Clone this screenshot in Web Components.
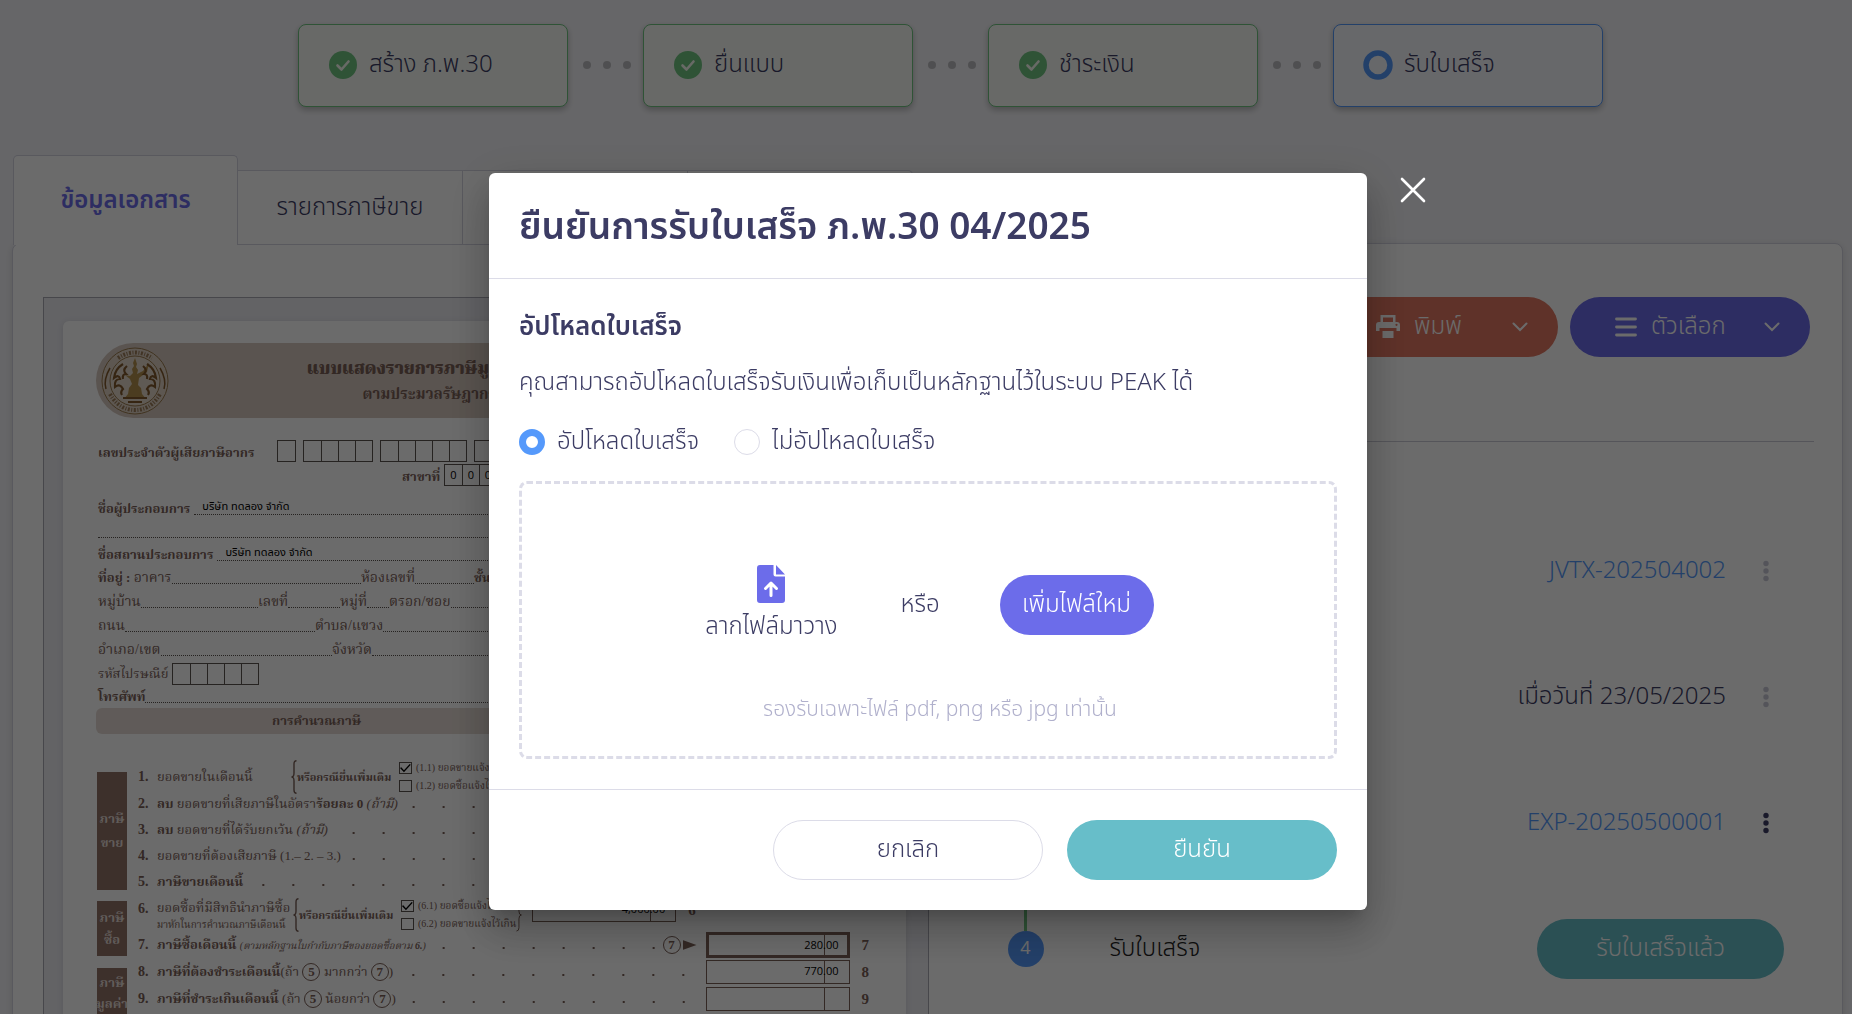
<!DOCTYPE html>
<html lang="th">
<head>
<meta charset="utf-8">
<title>ภ.พ.30 04/2025</title>
<style>
  :root {
    --ink: #3c3c64; --line: #dcdce8; --violet: #6c6cea; --teal: #67bec9; --blue: #5599fb;
    --green: #70c582; --brown: #7a6057; --serif: "Liberation Serif", "Norasi", "Noto Serif Thai", serif;
  }
  html, body { height: 100%; }
  body { margin: 0; background: #f4f4f8; color: var(--ink); overflow: hidden;
    font: 300 24px/36px "Noto Sans Thai", "Open Sans", "Noto Sans", sans-serif; }
</style>
</head>
<body>
<tax-page></tax-page>
<upload-dialog></upload-dialog>

<script>
const define = (name, html, setup) => {
  const t = document.createElement('template');
  t.innerHTML = '<style>*{box-sizing:border-box}button{font:inherit;color:inherit;border:0;background:none;padding:0;cursor:pointer}</style>' + html;
  customElements.define(name, class extends HTMLElement {
    constructor() {
      super();
      this.attachShadow({ mode: 'open' }).append(t.content.cloneNode(true));
    }
    connectedCallback() { if (setup) setup(this, this.shadowRoot); }
  });
};

/* ---------- progress steps ---------- */
define('step-card', `
<style>
  :host { display: flex; align-items: center; gap: 12px; width: 270px; height: 83px; padding: 0 0 2px 30px;
    box-sizing: border-box; border: 1px solid var(--green); border-radius: 8px; background: #f8fbf5;
    box-shadow: 0 3px 6px rgba(0,0,0,.25); }
  :host([current]) { border-color: var(--blue); background: #f6f8fd; }
  svg { width: 28px; height: 28px; flex: none; }
  .ring { display: none; overflow: visible; }
  :host([current]) .ring { display: block; }
  :host([current]) .done { display: none; }
</style>
<svg class="done" viewBox="0 0 28 28"><circle cx="14" cy="14" r="14" fill="#70c582"/><path d="M8.5 14.5l4 4 7-8" fill="none" stroke="#f8fdf4" stroke-width="2.6" stroke-linecap="round" stroke-linejoin="round"/></svg>
<svg class="ring" viewBox="0 0 28 28"><circle cx="14" cy="14" r="12" fill="none" stroke="#5599fb" stroke-width="5.5"/></svg>
<span><slot></slot></span>`);

define('step-dots', `
<style>
  :host { display: flex; align-items: center; justify-content: center; gap: 12px; width: 75px; padding: 0 0 2px 2px; box-sizing: border-box; }
  i { width: 8px; height: 8px; border-radius: 50%; background: #bdbdc0; }
</style><i></i><i></i><i></i>`);

/* ---------- tabs ---------- */
define('page-tab', `
<style>
  :host { display: block; width: 225px; height: 75px; box-sizing: border-box; border: 1px solid #d3d3e0; border-left: 0; background: #fff; }
  :host([active]) { height: 90px; background: #fff; border-left: 1px solid #d3d3e0; border-bottom: 0; border-radius: 5px 5px 0 0; color: var(--violet); font-weight: 600; }
  :host([last]) { border-radius: 0 5px 0 0; }
  button { width: 100%; height: 100%; }
</style><button type="button" role="tab"><slot></slot></button>`,
(el, root) => { if (el.hasAttribute('label')) root.querySelector('button').setAttribute('aria-label', el.getAttribute('label')); });

/* ---------- pill button ---------- */
define('pill-button', `
<style>
  :host { display: block; height: 60px; }
  button { display: flex; align-items: center; justify-content: center; width: 100%; height: 100%; border-radius: 30px;
    background: var(--fill, #fff); color: var(--text, #fff); border: 1px solid var(--edge, transparent);
    padding: var(--pad, 0); gap: 14px; background-clip: border-box; }
  ::slotted(svg:last-child) { margin-left: auto; }
</style><button type="button"><slot></slot></button>`);

/* ---------- tax form ---------- */
define('digit-boxes', `
<style>
  :host { display: flex; height: 22px; border: 1px solid #5b5350; box-sizing: border-box; }
  span { width: 17px; font: 11px/20px "Open Sans", sans-serif; color: #000; text-align: center; }
  span + span { border-left: 1px solid #5b5350; }
</style>`,
(el, root) => {
  const digits = el.getAttribute('digits') || '';
  for (let i = 0; i < +el.getAttribute('count'); i++) {
    const s = document.createElement('span');
    s.textContent = digits[i] || '';
    root.append(s);
  }
});

define('form-field', `
<style>
  :host { display: flex; min-width: 0; height: 22px; }
  .lead { flex: 1; align-self: flex-end; margin-bottom: 5px; border-bottom: 1px dotted #5b5350; font: 11px/12px "Noto Sans Thai", "Open Sans", sans-serif; color: #000; padding-left: 8px; height: 14px; }
  .label { white-space: nowrap; }
  :host([bold]) .label { font-weight: 700; font-size: 13px; margin-right: 4px; }
</style><span class="label"><slot></slot></span><span class="lead"><slot name="value"></slot></span>`);

define('amount-box', `
<style>
  :host { display: grid; grid-template-columns: 1fr 25px; width: 144px; height: 24px; border: 1px solid var(--brown); box-sizing: border-box; }
  :host([strong]) { border-width: 3px; height: 26px; grid-template-columns: 1fr 23px; }
  span { grid-area: 1/1/2/3; font: 11px/20px "Open Sans", sans-serif; color: #000; text-align: right; padding-right: 10px; }
  :host([strong]) span { padding-right: 8px; }
  i { grid-area: 1/2; border-left: 1px solid var(--brown); }
</style><i></i><span><slot></slot></span>`);

define('form-line', `
<style>
  :host { display: flex; align-items: center; height: var(--line-height, 26px); }
  .no { width: 19px; font-weight: 700; font-size: 14px; }
  .text { white-space: nowrap; }
  .dots { flex: 1; height: 12px; margin-left: 10px; background: radial-gradient(circle at 50% 50%, var(--brown) 1px, transparent 1.5px) right 7px top 3px / 30px 12px repeat-x; }
</style><span class="no"></span><span class="text"><slot></slot></span><span class="dots"></span><slot name="end"></slot>`,
(el, root) => { root.querySelector('.no').textContent = el.getAttribute('no') + '.'; });

define('option-pair', `
<style>
  :host { display: flex; align-items: center; height: 34px; font-size: 11px; }
  .brace { width: 6px; height: 34px; fill: none; stroke: var(--brown); stroke-width: 1.4; }
  .mid { font-weight: 700; white-space: nowrap; width: 102px; }
  .opts { font-size: 10px; line-height: 18px; }
  label { display: flex; align-items: center; gap: 4px; white-space: nowrap; height: 18px; }
  input { appearance: none; margin: 0; width: 13px; height: 12px; border: 1px solid #5b5350; flex: none; }
  input:checked::before { content: ""; display: block; width: 11px; height: 10px; background: #000;
    clip-path: polygon(0 50%, 12% 42%, 36% 72%, 88% 10%, 98% 18%, 36% 92%); }
</style>
<svg class="brace" viewBox="0 0 6 34"><path d="M5.500.7Q3 .7 3 4V13Q3 17 .5 17Q3 17 3 21V30Q3 33.300 5.500 33.300"/></svg>
<span class="mid">หรือกรณียื่นเพิ่มเติม</span>
<span class="opts"><label><input type="checkbox" checked><slot name="a"></slot></label><label><input type="checkbox"><slot name="b"></slot></label></span>`);

define('side-bar', `
<style>
  :host { display: flex; flex-direction: column; justify-content: center; align-items: center; width: 30px; box-sizing: border-box;
    background: #917268; color: #e6dcd6; font-weight: 700; font-size: 13px; }
</style><slot></slot>`);

define('tax-form', `
<style>
  :host { display: block; background: #fff; border-radius: 6px 6px 0 0; padding: 22px 32px 0 33px; color: var(--brown);
    font: 400 13px/22px var(--serif); height: 900px; box-shadow: 0 1px 6px rgba(0,0,0,.1); }
  .band { display: flex; height: 75px; border-radius: 38px; background: #d6c8be; align-items: center; }
  .band svg { width: 68px; height: 68px; margin-left: 5px; }
  .titles { flex: 1; padding-right: 184px; text-align: center; font-weight: 700; font-size: 15px; line-height: 24px; }
  .titles b { display: block; font-size: 17px; line-height: 26px; }
  .row { display: flex; align-items: center; height: 23px; padding-left: 2px; white-space: nowrap; }
  .wide { height: 24px; font-size: 14px; }
  .row b { font-size: 13px; }
  .id { height: 26px; margin-top: 20px; font-weight: 700; gap: 7px; }
  .id span { width: 172px; padding-top: 3px; }
  .branch { padding-left: 306px; height: 22px; gap: 6px; margin-bottom: 11px; font-weight: 700; }
  .branch span { width: 36px; padding-top: 3px; }
  .grow { flex: 1; }
  .calc { height: 26px; border-radius: 6px; background: #e4dad4; font-weight: 700; text-align: left; line-height: 26px; padding-left: 176px; }
  .section { display: grid; grid-template-columns: 30px 1fr; column-gap: 11px; padding-left: 1px; }
  .s1 { margin-top: 29px; }
  .s1 side-bar { height: 118px; margin-top: 9px; line-height: 24px; }
  .s2 { margin-top: 3px; }
  .s2 side-bar { height: 55px; margin-top: 3px; }
  .s3 { --line-height: 27px; }
  .s3 side-bar { height: 90px; margin-top: 10px; justify-content: flex-start; padding-top: 4px; line-height: 21px; }
  .lines { min-width: 0; }
  .first { height: 28px; display: flex; align-items: center; }
  .no { width: 19px; font-weight: 700; font-size: 14px; }
  .six { display: flex; align-items: flex-start; height: 34px; }
  .t1 { width: 134px; white-space: nowrap; }
  .t6 { width: 139px; line-height: 19px; white-space: nowrap; }
  small { display: block; font-size: 10px; line-height: 15px; }
  .c { display: inline-block; width: 18px; height: 18px; line-height: 16px; border: 1px solid var(--brown); border-radius: 50%; text-align: center; font-weight: 700; }
  .end { display: flex; align-items: center; gap: 12px; width: 168px; font-weight: 700; font-size: 15px; }
  .wide-end { width: 348px; }
  .note { font-size: 10px; }
  .arrow { width: 14px; height: 10px; background: var(--brown); clip-path: polygon(0 0, 100% 50%, 0 100%); }
  .pre { display: flex; align-items: center; justify-content: flex-end; gap: 2px; width: 30px; padding-right: 9px; }
  .pre > * { flex: none; }
  .close { width: 6px; height: 34px; margin: 0 10px 0 auto; fill: none; stroke: var(--brown); }
</style>
<div class="band">
  <svg viewBox="0 0 68 68" aria-hidden="true">
    <circle cx="34" cy="34" r="33" fill="#ddd0c2" stroke="#9a7a4d"/>
    <circle cx="34" cy="34" r="25" fill="#e2d6c8" stroke="#9a7a4d"/>
    <path d="M34 11l2 6-1 3 2 3-1 4 6-3 6-8-2 9-8 6-1 7 3 3 1 6 4 5H23l4-5 1-6 3-4-2-5-5-4 5 1 3-3-1-4 2-3-1-3z" fill="#b3904d"/>
    <path d="M22 17q-8 5-9 14q5-4 6 1q-6 0-5 8q5-4 8 2q-3 3-1 6M46 17q8 5 9 14q-5-4-6 1q6 0 5 8q-5-4-8 2q3 3 1 6M26 19q-5 4-1 8q-4 0-3 5M42 19q5 4 1 8q4 0 3 5M22 51h24M27 55h14" fill="none" stroke="#80582c" stroke-width="2.200"/>
    <path d="M5 42q-3-9 4-21M63 42q3-9-4-21" fill="none" stroke="#80582c" stroke-width="1.500"/>
    <path d="M17 11Q34 0 51 11M9 47Q18 63 34 63T59 47" fill="none" stroke="#80582c" stroke-width="4" stroke-dasharray="2 1.500 1 1.500" opacity=".7"/>
  </svg>
  <div class="titles"><b>แบบแสดงรายการภาษีมูลค่าเพิ่ม</b>ตามประมวลรัษฎากร</div>
</div>
<div class="row id"><span>เลขประจำตัวผู้เสียภาษีอากร</span><digit-boxes count="1"></digit-boxes><digit-boxes count="4"></digit-boxes><digit-boxes count="5"></digit-boxes><digit-boxes count="2"></digit-boxes><digit-boxes count="1"></digit-boxes></div>
<div class="row branch"><span>สาขาที่</span><digit-boxes count="5" digits="000"></digit-boxes></div>
<div class="row"><form-field bold class="grow">ชื่อผู้ประกอบการ<span slot="value">บริษัท ทดลอง จำกัด</span></form-field></div>
<div class="row"><form-field class="grow"></form-field></div>
<div class="row"><form-field bold class="grow">ชื่อสถานประกอบการ<span slot="value">บริษัท ทดลอง จำกัด</span></form-field></div>
<div class="row wide"><form-field style="width:263px"><b>ที่อยู่ :</b> อาคาร</form-field><form-field style="width:113px">ห้องเลขที่</form-field><form-field class="grow"><b>ชั้น</b></form-field></div>
<div class="row wide"><form-field style="width:160px">หมู่บ้าน</form-field><form-field style="width:82px">เลขที่</form-field><form-field style="width:49px">หมู่ที่</form-field><form-field class="grow">ตรอก/ซอย</form-field></div>
<div class="row wide"><form-field style="width:217px">ถนน</form-field><form-field class="grow">ตำบล/แขวง</form-field></div>
<div class="row wide"><form-field style="width:234px">อำเภอ/เขต</form-field><form-field class="grow">จังหวัด</form-field></div>
<div class="row"><span style="width:74px">รหัสไปรษณีย์</span><digit-boxes count="5"></digit-boxes></div>
<div class="row"><form-field class="grow"><b>โทรศัพท์</b></form-field></div>
<div class="calc">การคำนวณภาษี</div>
<div class="section s1">
  <side-bar><span>ภาษี</span><span>ขาย</span></side-bar>
  <div class="lines">
    <div class="first"><span class="no">1.</span><span class="t1">ยอดขายในเดือนนี้</span><option-pair><span slot="a">(1.1) ยอดขายแจ้งไว้ขาด</span><span slot="b">(1.2) ยอดซื้อแจ้งไว้เกิน</span></option-pair></div>
    <form-line no="2"><b>ลบ</b> ยอดขายที่เสียภาษีในอัตรา<b>ร้อยละ 0</b> <i>(ถ้ามี)</i><div slot="end" class="end"></div></form-line>
    <form-line no="3"><b>ลบ</b> ยอดขายที่ได้รับยกเว้น <i>(ถ้ามี)</i><div slot="end" class="end"></div></form-line>
    <form-line no="4">ยอดขายที่ต้องเสียภาษี (1.– 2. – 3.)<div slot="end" class="end"></div></form-line>
    <form-line no="5"><b>ภาษีขายเดือนนี้</b><div slot="end" class="end"></div></form-line>
  </div>
</div>
<div class="section s2">
  <side-bar><span>ภาษี</span><span>ซื้อ</span></side-bar>
  <div class="lines">
    <div class="six"><span class="no">6.</span><span class="t6">ยอดซื้อที่มีสิทธินำภาษีซื้อ<small>มาหักในการคำนวณภาษีเดือนนี้</small></span><option-pair><span slot="a">(6.1) ยอดซื้อแจ้งไว้ขาด</span><span slot="b">(6.2) ยอดขายแจ้งไว้เกิน</span></option-pair>
      <svg class="close" viewBox="0 0 6 34"><path d="M.5.700Q3 .7 3 4V13Q3 17 5.500 17Q3 17 3 21V30Q3 33.300 .5 33.300"/></svg>
      <div class="end wide-end"><amount-box>4,000.00</amount-box><span>6</span></div></div>
    <form-line no="7"><b>ภาษีซื้อเดือนนี้</b> <i class="note">(ตามหลักฐานใบกำกับภาษีของยอดซื้อตาม <b>6.</b>)</i><div slot="end" class="pre"><span class="c">7</span><span class="arrow"></span></div><div slot="end" class="end"><amount-box strong>280.00</amount-box>7</div></form-line>
  </div>
</div>
<div class="section s3">
  <side-bar><span>ภาษี</span><span>มูลค่า</span><span>เพิ่ม</span></side-bar>
  <div class="lines">
    <form-line no="8"><b>ภาษีที่ต้องชำระเดือนนี้</b>(ถ้า <span class="c">5</span> มากกว่า <span class="c">7</span>)<div slot="end" class="end"><amount-box>770.00</amount-box>8</div></form-line>
    <form-line no="9"><b>ภาษีที่ชำระเกินเดือนนี้</b> (ถ้า <span class="c">5</span> น้อยกว่า <span class="c">7</span>)<div slot="end" class="end"><amount-box></amount-box>9</div></form-line>
    <form-line no="10"><div slot="end" class="end"><amount-box></amount-box></div></form-line>
  </div>
</div>`);

/* ---------- status timeline ---------- */
define('timeline-row', `
<style>
  :host { display: flex; align-items: center; height: 126px; padding: 0 30px 0 78px; }
  .mark { align-self: stretch; display: flex; flex-direction: column; align-items: center; width: 38px; }
  .mark::before { content: ""; width: 3px; height: 45px; background: var(--green); }
  .mark::after { content: ""; width: 3px; flex: 1; background: var(--green); }
  :host([last]) .mark::after { background: none; }
  .num { width: 36px; height: 36px; border-radius: 50%; background: var(--green); color: #fff; font-size: 18px; line-height: 36px; text-align: center; font-weight: 400; }
  :host([last]) .num { background: var(--blue); }
  .name { margin-left: 65px; color: #222; }
  .tail { margin-left: auto; display: flex; align-items: center; gap: 22px; }
</style>
<span class="mark"><span class="num"><slot name="num"></slot></span></span>
<span class="name"><slot name="name"></slot></span><span class="tail"><slot></slot></span>`);

define('kebab-button', `
<style>
  :host { display: block; color: #c9c9d6; width: 36px; }
  :host([on]) { color: var(--ink); }
  button { display: flex; width: 36px; height: 36px; align-items: center; justify-content: center; }
</style><button type="button" aria-label="เมนู"><svg width="6" height="22" viewBox="0 0 6 22" fill="currentColor"><circle cx="3" cy="3.500" r="2.700"/><circle cx="3" cy="11" r="2.700"/><circle cx="3" cy="18.500" r="2.700"/></svg></button>`);

/* ---------- page behind the dialog ---------- */
define('tax-page', `
<style>
  :host { display: flex; flex-direction: column; height: 100vh; overflow: hidden; }
  nav.steps { display: flex; justify-content: center; padding: 24px 0 48px 49px; }
  .tabs { display: flex; align-items: flex-end; margin: 0 0 -2px 13px; height: 90px; flex: none; z-index: 1; }
  .card { flex: none; height: 1000px; margin: 0 9px 0 12px; padding: 53px 28px 0 30px; background: #fff; border: 1px solid #d3d3e0;
    border-radius: 8px; display: grid; grid-template-columns: 1fr 1fr; box-shadow: 0 2px 8px rgba(0,0,0,.12); }
  .viewer { border: 1px solid #a9a9b4; background: #ebebf1; padding: 23px 22px 0 19px; overflow: hidden; min-width: 0; }
  .actions { display: flex; justify-content: flex-end; gap: 12px; padding-right: 4px; }
  .actions pill-button { width: 240px; }
  .print { --fill: #e27762; --pad: 0 29px 0 57px; } .more { --fill: var(--violet); --pad: 0 29px 0 44px; }
  hr { border: 0; border-top: 1px solid #cbcbd6; margin: 84px 0 66px 22px; }
  a { color: var(--blue); text-decoration: none; }
  .got { width: 247px; --fill: var(--teal); }
  .chev { width: 16px; height: 10px; }
</style>
<nav class="steps">
  <step-card>สร้าง ภ.พ.30</step-card><step-dots></step-dots><step-card>ยื่นแบบ</step-card><step-dots></step-dots><step-card>ชำระเงิน</step-card><step-dots></step-dots><step-card current>รับใบเสร็จ</step-card>
</nav>
<div class="tabs" role="tablist"><page-tab active>ข้อมูลเอกสาร</page-tab><page-tab>รายการภาษีขาย</page-tab><page-tab label="รายการภาษีซื้อ"></page-tab><page-tab last label="ประวัติ"></page-tab></div>
<main class="card">
  <div class="viewer"><tax-form></tax-form></div>
  <section>
    <div class="actions">
      <pill-button class="print"><svg width="24" height="24" viewBox="0 0 24 24" fill="#fff"><path fill-rule="evenodd" d="M4.500 0h15v7H21a3 3 0 0 1 3 3v6h-3.500v-3h-17v3H0v-6a3 3 0 0 1 3-3h1.500zM7 2.500V7h10V2.500zM6.500 16h11v7h-11zM20.500 8.700a1.100 1.100 0 1 0 .01 0z"/></svg><span>พิมพ์</span><svg class="chev" width="16" height="10" viewBox="0 0 16 10"><path d="M1.500 1.500L8 8l6.500-6.500" fill="none" stroke="#fff" stroke-width="2" stroke-linecap="round"/></svg></pill-button>
      <pill-button class="more"><svg width="22" height="20" viewBox="0 0 22 20"><path d="M1.500 2h19M1.500 10h19M1.500 18h19" stroke="#fff" stroke-width="2.800" stroke-linecap="round"/></svg><span>ตัวเลือก</span><svg class="chev" width="16" height="10" viewBox="0 0 16 10"><path d="M1.500 1.500L8 8l6.500-6.500" fill="none" stroke="#fff" stroke-width="2" stroke-linecap="round"/></svg></pill-button>
    </div>
    <hr>
    <timeline-row><a href="#jv">JVTX-202504002</a><kebab-button></kebab-button></timeline-row>
    <timeline-row><span>เมื่อวันที่ 23/05/2025</span><kebab-button></kebab-button></timeline-row>
    <timeline-row><a href="#exp">EXP-20250500001</a><kebab-button on></kebab-button></timeline-row>
    <timeline-row last><span slot="num">4</span><span slot="name">รับใบเสร็จ</span><pill-button class="got">รับใบเสร็จแล้ว</pill-button></timeline-row>
  </section>
</main>`);

/* ---------- dialog ---------- */
define('upload-dialog', `
<style>
  :host { position: fixed; inset: 0; display: flex; align-items: flex-start; justify-content: center; padding: 173px 0 0 4px;
    box-sizing: border-box; background: rgba(0,0,0,.58); z-index: 10; }
  .dialog { position: relative; width: 878px; max-width: 92vw; background: #fff; border-radius: 6px;
    box-shadow: 0 11px 15px -7px rgba(0,0,0,.2), 0 24px 38px 3px rgba(0,0,0,.14), 0 9px 46px 8px rgba(0,0,0,.12); }
  .close { position: absolute; left: 100%; top: 0; margin-left: 30px; width: 32px; height: 34px; display: flex; align-items: center; justify-content: center; }
  h2, h3, p { margin: 0; }
  header { padding: 28px 30px 23px; border-bottom: 1px solid var(--line); }
  h2 { font-size: 37px; line-height: 54px; font-weight: 600; }
  .body { padding: 30px; }
  h3 { font-size: 26px; line-height: 36px; font-weight: 600; }
  p { margin-top: 20px; }
  fieldset { border: 0; margin: 23px 0 21px; padding: 0; display: flex; gap: 35px; }
  label { display: flex; align-items: center; gap: 12px; height: 36px; }
  input[type=radio] { appearance: none; margin: 0; width: 26px; height: 26px; border: 1px solid var(--line); border-radius: 50%; }
  input[type=radio]:checked { border: 7px solid #5599fb; }
  .drop { border: 3px dashed var(--line); border-radius: 8px; height: 278px; padding-top: 80px; }
  .pick { display: flex; justify-content: center; align-items: center; gap: 60px; height: 82px; }
  .drag { display: flex; flex-direction: column; align-items: center; gap: 6px; width: 138px; }
  .drag svg { width: 28px; height: 38px; }
  .add { width: 154px; --fill: var(--violet); }
  .hint { margin: 46px 0 0 24px; text-align: center; font-size: 21px; line-height: 36px; color: #b0b0cc; }
  footer { display: flex; justify-content: flex-end; gap: 24px; padding: 30px; border-top: 1px solid var(--line); }
  footer pill-button { width: 270px; }
  .cancel { --text: var(--ink); --edge: var(--line); } .ok { --fill: var(--teal); }
</style>
<div class="dialog" role="dialog" aria-modal="true" aria-labelledby="title">
  <button class="close" type="button" aria-label="ปิด"><svg width="26" height="26" viewBox="0 0 26 26"><path d="M2 2l22 22M24 2L2 24" stroke="#fff" stroke-width="2.600" stroke-linecap="round"/></svg></button>
  <header><h2 id="title">ยืนยันการรับใบเสร็จ ภ.พ.30 04/2025</h2></header>
  <div class="body">
    <h3>อัปโหลดใบเสร็จ</h3>
    <p>คุณสามารถอัปโหลดใบเสร็จรับเงินเพื่อเก็บเป็นหลักฐานไว้ในระบบ PEAK ได้</p>
    <fieldset>
      <label><input type="radio" name="up" checked>อัปโหลดใบเสร็จ</label>
      <label><input type="radio" name="up">ไม่อัปโหลดใบเสร็จ</label>
    </fieldset>
    <div class="drop">
      <div class="pick">
        <div class="drag">
          <svg viewBox="0 0 28 38"><path d="M3 0h13.500v9.500a2 2 0 0 0 2 2H28V35a3 3 0 0 1-3 3H3a3 3 0 0 1-3-3V3a3 3 0 0 1 3-3z" fill="#6c6cea"/><path d="M19 0l9 9.500h-9z" fill="#6c6cea"/><path d="M14 30.500V18.500M8.500 23.500l5.500-5.500 5.500 5.500" fill="none" stroke="#fff" stroke-width="3" stroke-linecap="round" stroke-linejoin="round"/></svg>
          <span>ลากไฟล์มาวาง</span>
        </div>
        <span>หรือ</span>
        <pill-button class="add">เพิ่มไฟล์ใหม่</pill-button>
      </div>
      <div class="hint">รองรับเฉพาะไฟล์ pdf, png หรือ jpg เท่านั้น</div>
    </div>
  </div>
  <footer><pill-button class="cancel">ยกเลิก</pill-button><pill-button class="ok">ยืนยัน</pill-button></footer>
</div>`);
</script>
</body>
</html>
